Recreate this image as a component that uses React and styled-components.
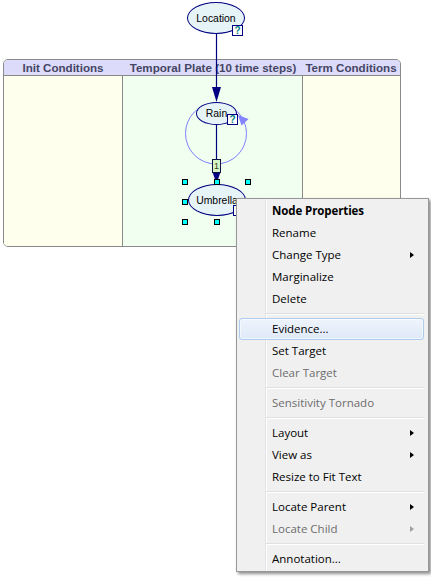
import React from 'react';
import styled, { createGlobalStyle } from 'styled-components';

const Global = createGlobalStyle`
  html, body { margin: 0; padding: 0; background: #fff; }
  body { width: 431px; height: 577px; overflow: hidden; }
`;

const Canvas = styled.div`
  position: relative;
  width: 431px;
  height: 577px;
  box-sizing: border-box;
  padding: 59px 0 0 3px;
  background: #fff;
  overflow: hidden;
`;

const Plate = styled.div`
  width: 398px;
  height: 188px;
  box-sizing: border-box;
  border: 1px solid #8a8a8a;
  border-radius: 5px;
  overflow: hidden;
  display: grid;
  grid-template-columns: 118px 180px 98px;
  grid-template-rows: 16px 1fr;
`;

const HeaderCell = styled.div`
  box-sizing: border-box;
  background: #dcdcfa;
  border-bottom: 1px solid #8a8a8a;
  display: flex;
  align-items: center;
  justify-content: center;
  font-family: "Liberation Sans", Arial, sans-serif;
  font-weight: bold;
  font-size: 11.6px;
  color: #454565;
  white-space: nowrap;
  padding-left: ${p => p.$shift || 0}px;
`;

const BodyCell = styled.div`
  box-sizing: border-box;
  background: ${p => p.$bg};
  border-left: ${p => (p.$divider ? '1px solid #8a8a8a' : 'none')};
`;

const Edges = styled.svg`
  position: absolute;
  left: 0;
  top: 0;
  width: 431px;
  height: 577px;
  pointer-events: none;
`;

const NodeEllipse = styled.div`
  position: absolute;
  left: ${p => p.$x}px;
  top: ${p => p.$y}px;
  width: ${p => p.$w}px;
  height: ${p => p.$h}px;
  box-sizing: border-box;
  border: 1px solid #000080;
  border-radius: 50%;
  background: #e6f4f8;
  display: flex;
  align-items: center;
  justify-content: center;
  font-family: "Liberation Sans", Arial, sans-serif;
  font-size: 10.4px;
  color: #000;
  padding-bottom: ${p => p.$lift || 0}px;
`;

const HelpBox = styled.div`
  position: absolute;
  left: ${p => p.$x}px;
  top: ${p => p.$y}px;
  width: 11px;
  height: 11px;
  box-sizing: border-box;
  border: 1px solid #000080;
  background: #fff;
  display: flex;
  align-items: center;
  justify-content: center;
  font-family: "Liberation Sans", Arial, sans-serif;
  font-weight: bold;
  font-size: 10px;
  line-height: 1;
  color: #008080;
`;

const LagBox = styled.div`
  position: absolute;
  left: 212px;
  top: 159px;
  width: 9px;
  height: 14px;
  box-sizing: border-box;
  border: 1px solid #101040;
  background: #d4f5c8;
  display: flex;
  align-items: center;
  justify-content: center;
  font-family: "Liberation Sans", Arial, sans-serif;
  font-size: 9px;
  line-height: 1;
  color: #404010;
`;

const Handle = styled.div`
  position: absolute;
  left: ${p => p.$x}px;
  top: ${p => p.$y}px;
  width: 6px;
  height: 6px;
  box-sizing: border-box;
  border: 1px solid #000;
  background: #00ffff;
`;

const Menu = styled.div`
  position: absolute;
  left: 236px;
  top: 198px;
  width: 193px;
  box-sizing: border-box;
  border: 1px solid #979797;
  padding: 1px 4px 1px 2px;
  background:
    linear-gradient(to right,
      transparent 0, transparent 28px,
      #e2e3e3 28px, #e2e3e3 29px,
      #ffffff 29px, #ffffff 30px,
      transparent 30px),
    #f0f0f0;
  box-shadow: 2px 2px 3px rgba(0, 0, 0, 0.45);
  font-family: "Open Sans", "Noto Sans", sans-serif;
  font-size: 11.5px;
  display: flex;
  flex-direction: column;
`;

const Item = styled.div`
  height: 22px;
  box-sizing: border-box;
  display: flex;
  align-items: center;
  justify-content: space-between;
  padding: 0 9px 1px 32px;
  border: 1px solid ${p => (p.$hot ? '#aeccf0' : 'transparent')};
  border-radius: 3px;
  background: ${p => (p.$hot ? 'linear-gradient(#eef4fc, #dfe9f8)' : 'transparent')};
  box-shadow: ${p => (p.$hot ? 'inset 0 0 0 1px rgba(255,255,255,0.55)' : 'none')};
  color: ${p => (p.$disabled ? '#6d6d6d' : '#000')};
  font-weight: ${p => (p.$bold ? 700 : 400)};
  white-space: nowrap;
  letter-spacing: ${p => (p.$bold ? '-0.1px' : '0')};
`;

const SubArrow = styled.span`
  width: 0;
  height: 0;
  margin-top: 1px;
  border-top: 3.5px solid transparent;
  border-bottom: 3.5px solid transparent;
  border-left: 4px solid ${p => (p.$disabled ? '#a0a0a0' : '#000')};
`;

const Separator = styled.div`
  height: 8px;
  box-sizing: border-box;
  padding: 3px 0 0 27px;
  &::before {
    content: '';
    display: block;
    border-top: 1px solid #e0e0e0;
    border-bottom: 1px solid #ffffff;
  }
`;

const menu = [
  { label: 'Node Properties', bold: true },
  { label: 'Rename' },
  { label: 'Change Type', sub: true },
  { label: 'Marginalize' },
  { label: 'Delete' },
  { sep: true },
  { label: 'Evidence...', hot: true },
  { label: 'Set Target' },
  { label: 'Clear Target', disabled: true },
  { sep: true },
  { label: 'Sensitivity Tornado', disabled: true },
  { sep: true },
  { label: 'Layout', sub: true },
  { label: 'View as', sub: true },
  { label: 'Resize to Fit Text' },
  { sep: true },
  { label: 'Locate Parent', sub: true },
  { label: 'Locate Child', sub: true, disabled: true },
  { sep: true },
  { label: 'Annotation...' },
];

const handles = [
  [182, 179], [214, 179], [245, 179],
  [182, 199], [245, 199],
  [182, 219], [214, 219], [245, 219],
];

export default function App() {
  return (
    <>
      <Global />
      <Canvas>
        <Plate>
          <HeaderCell>Init Conditions</HeaderCell>
          <HeaderCell $shift={2}>Temporal Plate (10 time steps)</HeaderCell>
          <HeaderCell>Term Conditions</HeaderCell>
          <BodyCell $bg="#ffffee" />
          <BodyCell $bg="#f0fff0" $divider />
          <BodyCell $bg="#ffffee" $divider />
        </Plate>

        <Edges viewBox="0 0 431 577">
          <circle cx="216" cy="133.5" r="30.5" fill="none" stroke="#8080ff" strokeWidth="1" />
          <line x1="216.5" y1="33" x2="216.5" y2="90" stroke="#000080" strokeWidth="1.2" />
          <polygon points="212,87 221,87 216.5,102" fill="#000080" />
          <line x1="216.5" y1="124" x2="216.5" y2="174" stroke="#000080" strokeWidth="1.2" />
          <polygon points="212.5,172 220.5,172 216.5,184" fill="#000080" />
          <polygon points="238,115 248.5,119 241.5,125.5" fill="#8484ff" />
        </Edges>

        <NodeEllipse $x={187} $y={2} $w={58} $h={32}>Location</NodeEllipse>
        <HelpBox $x={232} $y={25}>?</HelpBox>

        <NodeEllipse $x={196} $y={102} $w={41} $h={23} $lift={1}>Rain</NodeEllipse>
        <HelpBox $x={227} $y={114}>?</HelpBox>

        <LagBox>1</LagBox>

        <NodeEllipse $x={188} $y={184} $w={58} $h={32}>Umbrella</NodeEllipse>
        <HelpBox $x={233} $y={205}>?</HelpBox>

        {handles.map(([x, y]) => (
          <Handle key={`${x}-${y}`} $x={x} $y={y} />
        ))}

        <Menu>
          {menu.map((m, i) =>
            m.sep ? (
              <Separator key={i} />
            ) : (
              <Item key={i} $bold={m.bold} $hot={m.hot} $disabled={m.disabled}>
                <span>{m.label}</span>
                {m.sub && <SubArrow $disabled={m.disabled} />}
              </Item>
            )
          )}
        </Menu>
      </Canvas>
    </>
  );
}
